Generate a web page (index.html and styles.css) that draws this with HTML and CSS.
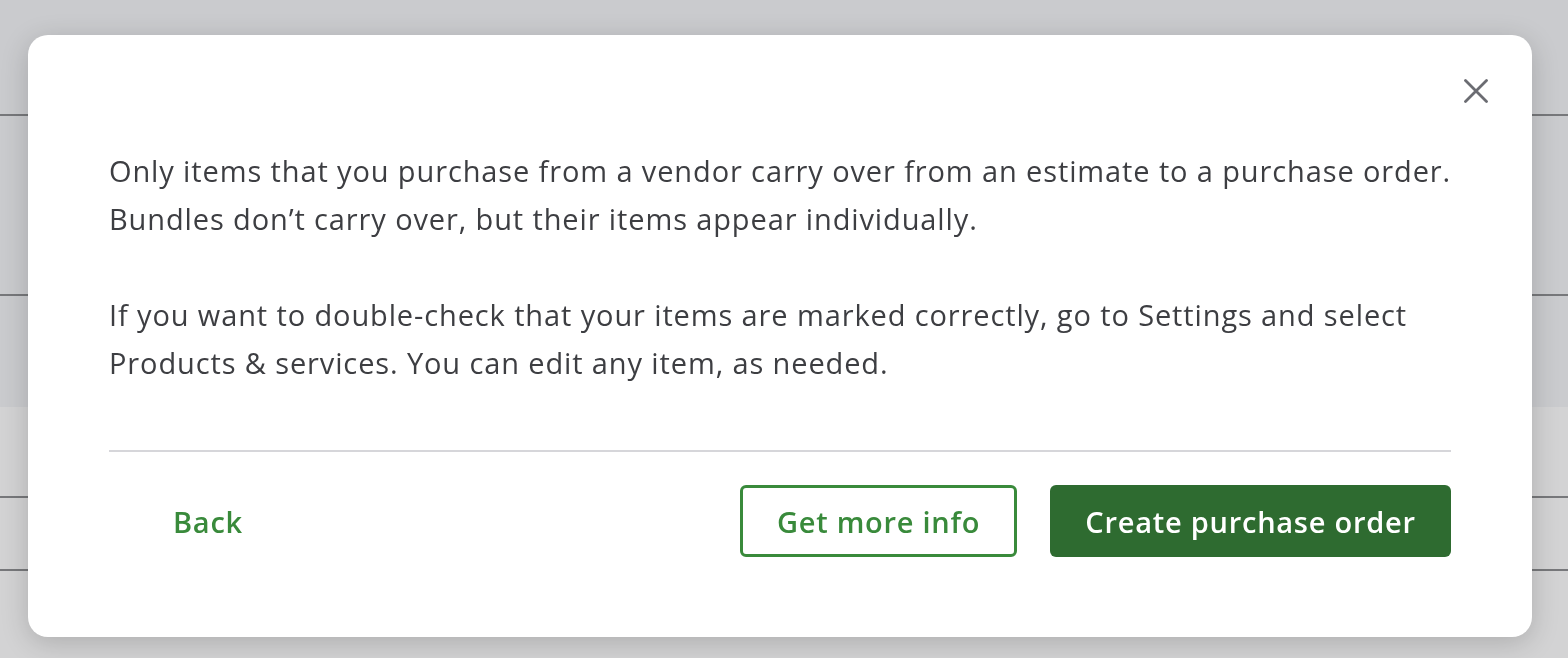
FILE: index.html
```html
<!DOCTYPE html>
<html>
<head>
<meta charset="utf-8">
<link rel="stylesheet" href="styles.css">
</head>
<body>
<div class="page">
  <div class="top">
    <div class="row r1"></div>
    <div class="row r2"></div>
    <div class="row r3"></div>
  </div>
  <div class="bottom">
    <div class="row r4"></div>
    <div class="row r5"></div>
    <div class="row r6"></div>
  </div>
</div>
<div class="overlay">
  <div class="modal">
    <div class="close-row">
      <button class="close" aria-label="Close">
        <svg width="24" height="24" viewBox="0 0 24 24"><path d="M1.5 1.5 L22.5 22.5 M22.5 1.5 L1.5 22.5" stroke="#6b6c72" stroke-width="2.8" stroke-linecap="round" fill="none"/></svg>
      </button>
    </div>
    <div class="body">
      <p>Only items that you purchase from a vendor carry over from an estimate to a purchase order.<br>Bundles don’t carry over, but their items appear individually.</p>
      <p>If you want to double-check that your items are marked correctly, go to Settings and select<br>Products &amp; services. You can edit any item, as needed.</p>
    </div>
    <div class="divider"></div>
    <div class="footer">
      <button class="btn-link">Back</button>
      <div class="right">
        <button class="btn-outline">Get more info</button>
        <button class="btn-primary">Create purchase order</button>
      </div>
    </div>
  </div>
</div>
</body>
</html>
```
FILE: styles.css
```css
html, body {
  margin: 0;
  padding: 0;
  height: 100%;
  overflow: hidden;
}
body {
  font-family: "Open Sans", "Noto Sans", sans-serif;
  background: #d3d3d4;
}
.page {
  display: flex;
  flex-direction: column;
  height: 658px;
}
.top {
  background: #cacbce;
  height: 407px;
  display: flex;
  flex-direction: column;
}
.top .r1 { height: 114px; border-bottom: 2px solid #77787b; }
.top .r2 { height: 178px; border-bottom: 2px solid #77787b; }
.bottom {
  flex: 1;
  display: flex;
  flex-direction: column;
}
.bottom .r4 { height: 89px; border-bottom: 2px solid #77787b; }
.bottom .r5 { height: 71px; border-bottom: 2px solid #77787b; }
.overlay {
  position: fixed;
  inset: 0;
  padding: 35px 36px 21px 28px;
  display: flex;
}
.modal {
  flex: 1;
  background: #ffffff;
  border-radius: 20px;
  box-shadow: 0 6px 28px rgba(0, 0, 0, 0.18);
  padding: 0 81px 80px 81px;
  display: flex;
  flex-direction: column;
}
.close-row {
  display: flex;
  justify-content: flex-end;
  height: 113px;
  margin-right: -37px;
}
.close {
  background: none;
  border: 0;
  padding: 0;
  margin-top: 44px;
  width: 24px;
  height: 24px;
  cursor: pointer;
}
.close svg { display: block; }
.body p {
  margin: 0 0 48px 0;
  font-size: 29px;
  line-height: 48px;
  color: #3d3e42;
  letter-spacing: 0.88px;
  white-space: nowrap;
}
.body p:last-child { margin-bottom: 63px; }
.divider {
  height: 2px;
  background: #d6d6da;
}
.footer {
  margin-top: 33px;
  display: flex;
  justify-content: space-between;
  align-items: center;
}
.right {
  display: flex;
  gap: 33px;
}
button {
  font-family: inherit;
  letter-spacing: 0.75px;
}
.btn-link {
  background: none;
  border: 0;
  color: #398a3b;
  font-size: 29px;
  font-weight: 600;
  padding: 0 0 0 64px;
  height: 72px;
}
.btn-outline {
  height: 72px;
  width: 277px;
  background: #fff;
  border: 3px solid #398a3b;
  border-radius: 6px;
  color: #398a3b;
  font-size: 29px;
  font-weight: 600;
}
.btn-primary {
  height: 72px;
  width: 401px;
  background: #2e6b30;
  border: 0;
  border-radius: 6px;
  color: #ffffff;
  font-size: 29px;
  font-weight: 600;
}
```
